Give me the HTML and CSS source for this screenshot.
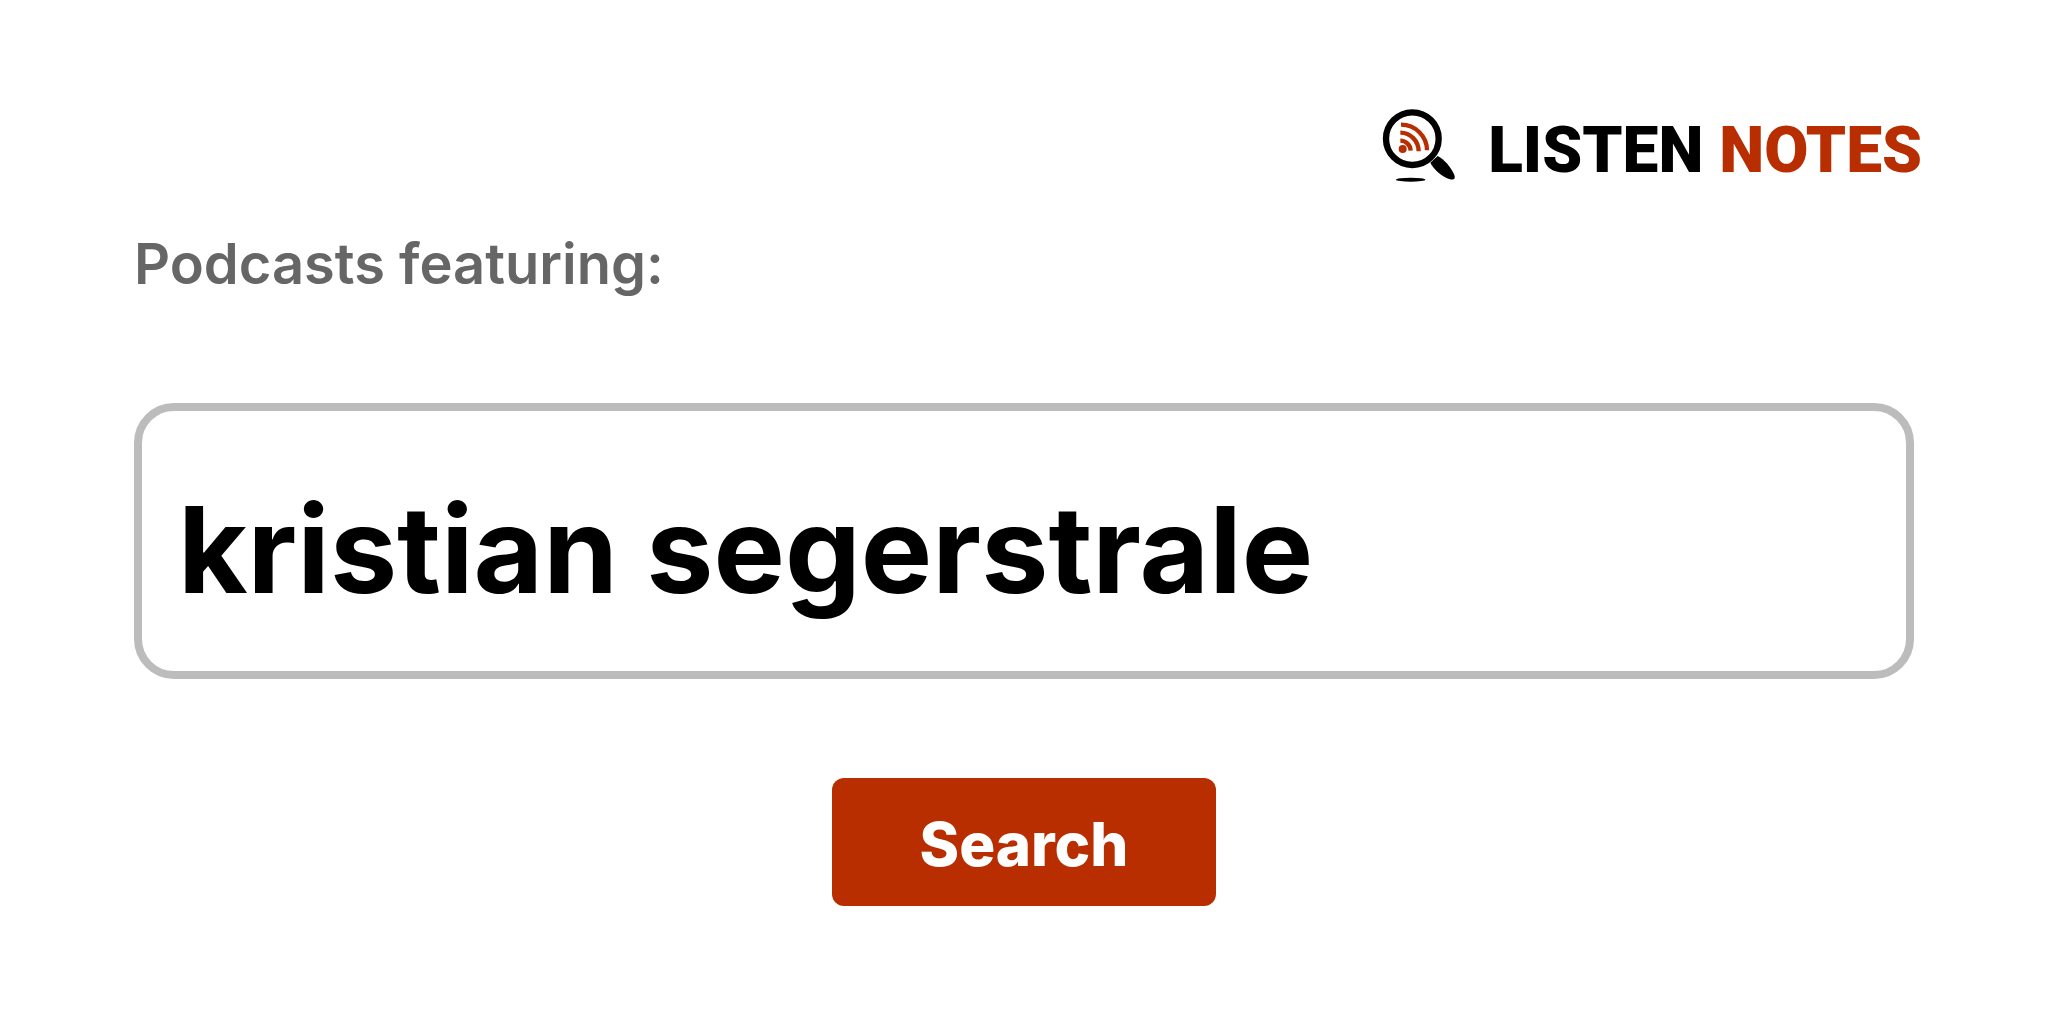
FILE: index.html
```html
<!DOCTYPE html>
<html lang="en">
<head>
  <meta charset="UTF-8">
  <meta name="viewport" content="width=device-width, initial-scale=1.0">
  <title>Podcasts featuring: kristian segerstrale - Listen Notes</title>
  <link rel="stylesheet" href="styles.css">
</head>
<body>
  <header class="header">
    <a class="logo" href="/" aria-label="Listen Notes">
      <svg class="logo-icon" viewBox="40 40 220 222" aria-hidden="true">
        <ellipse cx="125" cy="255" rx="44" ry="6" fill="#000"/>
        <path d="M184 204 L206 184 C226 194 246 218 256 241 C260 252 254 257 243 254 C219 246 197 228 184 204 Z" fill="#000"/>
        <circle cx="130" cy="132" r="79" fill="#fff" stroke="#000" stroke-width="19"/>
        <circle cx="101" cy="163" r="12" fill="#b82e00"/>
        <g fill="none" stroke="#b82e00" stroke-width="13">
          <path d="M94 138 A31 31 0 0 1 125 168"/>
          <path d="M94 114 A55 56 0 0 1 149 170"/>
          <path d="M96 90 A78 77 0 0 1 174 167"/>
        </g>
      </svg>
      <span class="logo-text">LISTEN <span class="logo-accent">NOTES</span></span>
    </a>
  </header>

  <main>
    <form class="search-form" action="/search">
      <label class="search-label" for="q">Podcasts featuring:</label>
      <input class="search-input" id="q" name="q" type="text" value="kristian segerstrale">
      <button class="search-button" type="submit">Search</button>
    </form>
  </main>
</body>
</html>
```

FILE: styles.css
```css
* {
  box-sizing: border-box;
}

body {
  margin: 0;
  padding: 108px 134px 0;
  background: #fff;
  font-family: Inter, "Liberation Sans", sans-serif;
}

.header {
  display: flex;
  justify-content: flex-end;
  margin-right: -8px;
}

.logo {
  display: flex;
  align-items: flex-start;
  gap: 32px;
  color: #000;
  text-decoration: none;
}

.logo-icon {
  width: 74px;
  height: 74px;
}

.logo-text {
  font-family: Roboto, sans-serif;
  font-size: 64px;
  font-weight: 900;
  line-height: 86px;
}

.logo-accent {
  color: #b82e00;
}

.search-form {
  display: flex;
  flex-direction: column;
  margin-top: 34px;
}

.search-label {
  color: #666;
  font-size: 56px;
  font-weight: 600;
  line-height: 72px;
}

.search-input {
  width: 100%;
  height: 276px;
  margin-top: 103px;
  padding: 16px 36px 0;
  border: 8px solid #bcbcbc;
  border-radius: 40px;
  background: #fff;
  color: #000;
  font-family: inherit;
  font-size: 120px;
  font-weight: 700;
  outline: none;
}

.search-button {
  align-self: center;
  width: 384px;
  height: 128px;
  margin-top: 99px;
  padding: 4px 0 0;
  border: 0;
  border-radius: 12px;
  background: #b82e00;
  color: #fff;
  font-family: inherit;
  font-size: 60px;
  font-weight: 800;
  cursor: pointer;
}
```
